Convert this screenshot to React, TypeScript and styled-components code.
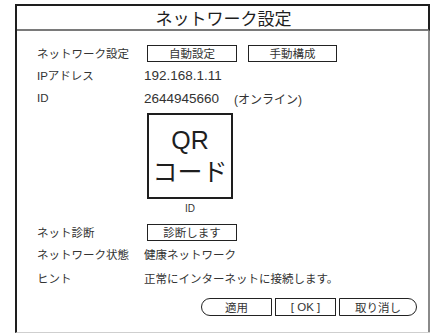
import styled, { createGlobalStyle } from 'styled-components';

const GlobalStyle = createGlobalStyle`
  html, body {
    margin: 0;
    padding: 0;
    background: #fff;
  }
  body {
    font-family: 'Liberation Sans', 'Noto Sans CJK JP', sans-serif;
    color: #333;
  }
`;

const rows = [
  { label: 'ネットワーク状態', value: '健康ネットワーク' },
  { label: 'ヒント', value: '正常にインターネットに接続します。' },
];

export default function App() {
  return (
    <>
      <GlobalStyle />
      <Page>
        <Frame>
          <Header>ネットワーク設定</Header>
          <Body>
            <Row $h={22} $top={11}>
              <Label>ネットワーク設定</Label>
              <ButtonGroup>
                <Button $w={90}>自動設定</Button>
                <Button $w={89}>手動構成</Button>
              </ButtonGroup>
            </Row>
            <Row $h={22}>
              <Label>IPアドレス</Label>
              <Value>
                <Num>192.168.1.11</Num>
              </Value>
            </Row>
            <Row $h={24}>
              <Label>ID</Label>
              <Value>
                <Num>2644945660</Num>
                <Status>(オンライン)</Status>
              </Value>
            </Row>
            <QrBlock>
              <QrBox>
                <QrLine>QR</QrLine>
                <QrLine>コード</QrLine>
              </QrBox>
              <QrCaption>ID</QrCaption>
            </QrBlock>
            <Row $h={22} $top={4}>
              <Label>ネット診断</Label>
              <ButtonGroup>
                <Button $w={90}>診断します</Button>
              </ButtonGroup>
            </Row>
            {rows.map((r, i) => (
              <Row key={r.label} $h={i === 0 ? 22 : 26}>
                <Label>{r.label}</Label>
                <Value>{r.value}</Value>
              </Row>
            ))}
            <Footer>
              <FootButton $w={71} $side="left">適用</FootButton>
              <FootButton $w={61}>[ OK ]</FootButton>
              <FootButton $w={78} $side="right">取り消し</FootButton>
            </Footer>
          </Body>
        </Frame>
      </Page>
    </>
  );
}

const Page = styled.div`
  width: 438px;
  height: 333px;
  padding: 4px 0 0 15px;
  box-sizing: border-box;
  overflow: hidden;
`;

const Frame = styled.div`
  width: 415px;
  height: 329px;
  box-sizing: border-box;
  border-left: 2px solid #1e1e1e;
  border-bottom: 1px solid #cfcfcf;
  display: flex;
  flex-direction: column;
`;

const Header = styled.div`
  height: 27px;
  box-sizing: border-box;
  border-top: 2px solid #1e1e1e;
  border-right: 2px solid #1e1e1e;
  border-bottom: 2px solid #7a7a7a;
  display: flex;
  align-items: center;
  justify-content: center;
  font-size: 17px;
  color: #1e1e1e;
  padding-left: 2px;
`;

const Body = styled.div`
  flex: 1;
  border-right: 2px solid #8a8a8a;
  padding-left: 20px;
  display: flex;
  flex-direction: column;
`;

const Row = styled.div<{ $h: number; $top?: number }>`
  display: flex;
  align-items: center;
  height: ${(p) => p.$h}px;
  margin-top: ${(p) => p.$top ?? 0}px;
`;

const Label = styled.div`
  width: 107px;
  font-size: 11.5px;
`;

const Value = styled.div`
  font-size: 11.5px;
  display: flex;
  align-items: center;
`;

const Num = styled.span`
  font-size: 13.5px;
`;

const Status = styled.span`
  margin-left: 15px;
  font-size: 12px;
`;

const ButtonGroup = styled.div`
  display: flex;
  gap: 11px;
  margin-left: 3px;
`;

const Button = styled.div<{ $w: number }>`
  width: ${(p) => p.$w}px;
  height: 17px;
  box-sizing: border-box;
  border: 1.5px solid #222;
  display: flex;
  align-items: center;
  justify-content: center;
  font-size: 11.5px;
  background: #fff;
`;

const QrBlock = styled.div`
  margin: 3px 0 0 110px;
  width: 86px;
  display: flex;
  flex-direction: column;
  align-items: center;
`;

const QrBox = styled.div`
  width: 86px;
  height: 86px;
  box-sizing: border-box;
  border: 2px solid #1e1e1e;
  display: flex;
  flex-direction: column;
  align-items: center;
  justify-content: center;
`;

const QrLine = styled.div`
  font-size: 25px;
  line-height: 32px;
  color: #1e1e1e;
`;

const QrCaption = styled.div`
  height: 18px;
  display: flex;
  align-items: center;
  font-size: 10px;
`;

const Footer = styled.div`
  display: flex;
  justify-content: flex-end;
  gap: 3px;
  margin-top: 7px;
  padding-right: 11px;
`;

const FootButton = styled.div<{ $w: number; $side?: 'left' | 'right' }>`
  width: ${(p) => p.$w}px;
  height: 18px;
  box-sizing: border-box;
  border: 1.5px solid #222;
  border-radius: ${(p) =>
    p.$side === 'left' ? '9px 0 0 9px' : p.$side === 'right' ? '0 9px 9px 0' : '0'};
  display: flex;
  align-items: center;
  justify-content: center;
  font-size: 11.5px;
`;
